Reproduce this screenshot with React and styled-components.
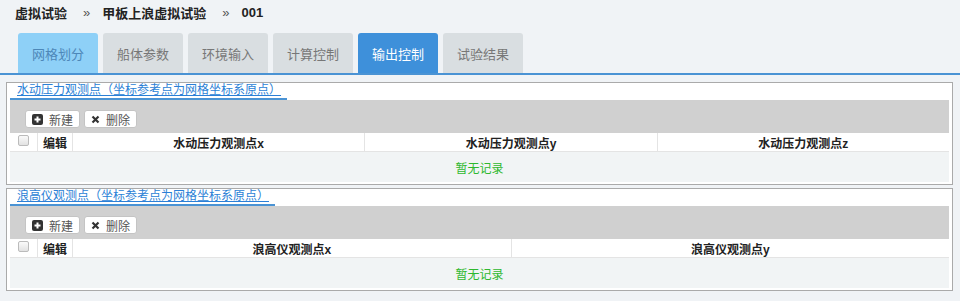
import React from 'react';
import styled, { createGlobalStyle } from 'styled-components';

const Global = createGlobalStyle`
  html, body {
    margin: 0;
    padding: 0;
    background: #f0f3f6;
    font-family: "Liberation Sans", "Noto Sans CJK SC", sans-serif;
    font-size: 12px;
    color: #333;
  }
`;

const Page = styled.div`
  width: 960px;
  height: 301px;
  overflow: hidden;
  background: #f0f3f6;
`;

const Crumbs = styled.div`
  display: flex;
  align-items: center;
  height: 25px;
  padding: 0 0 0 15px;
  font-size: 13px;
  font-weight: bold;
  color: #222;
`;

const Sep = styled.span`
  font-weight: normal;
  color: #555;
  margin: 0 12px 0 16px;
`;

const Tabs = styled.div`
  display: flex;
  gap: 5px;
  padding: 8px 0 0 18px;
  border-bottom: 2px solid #4a93d4;
`;

const Tab = styled.div`
  width: 80px;
  height: 40px;
  display: flex;
  align-items: center;
  justify-content: center;
  font-size: 13px;
  border-radius: 3px 3px 0 0;
  background: ${p => (p.$active ? '#3e90da' : p.$hover ? '#8ed0f7' : '#d9dee1')};
  color: ${p => (p.$active ? '#fff' : p.$hover ? '#4d87b8' : '#777')};
`;

const Panel = styled.div`
  margin: ${p => (p.$first ? '7px' : '3px')} 7px 0 6px;
  border: 1px solid #aaa;
  background: #fff;
  padding: 0 3px 2px 3px;
`;

const Title = styled.div`
  display: inline-block;
  padding: 0 6px 0 7px;
  line-height: 15px;
  font-size: 12px;
  color: #2b7fd6;
  text-decoration: underline;
  border-bottom: 2px solid #4a93d4;
  vertical-align: top;
`;

const Toolbar = styled.div`
  background: #d0d0d0;
  height: 33px;
  box-sizing: border-box;
  padding: 10px 0 0 15px;
  display: flex;
  align-items: flex-start;
  gap: 4px;
`;

const Btn = styled.button`
  display: flex;
  align-items: center;
  gap: 6px;
  height: 18px;
  padding: 0 6px;
  background: #fff;
  border: 1px solid #c4c4c4;
  border-radius: 3px;
  font-family: inherit;
  font-size: 12px;
  color: #555;
`;

const Table = styled.div`
  display: grid;
  grid-template-columns: 27px 35px repeat(${p => p.$cols}, 1fr);
`;

const Head = styled.div`
  height: 18px;
  display: flex;
  align-items: center;
  justify-content: ${p => (p.$left ? 'flex-start' : 'center')};
  padding-left: ${p => (p.$left ? '5px' : '0')};
  font-weight: bold;
  font-size: 12px;
  color: #222;
  border-left: ${p => (p.$noline ? 'none' : '1px solid #e4e4e4')};
  border-bottom: 1px solid #e4e4e4;
`;

const Check = styled.span`
  width: 9px;
  height: 9px;
  margin-top: -3px;
  border: 1px solid #bbb;
  border-radius: 2px;
  background: linear-gradient(#fafafa, #e2e2e2);
`;

const Empty = styled.div`
  grid-column: 1 / -1;
  height: 30px;
  background: #f1f4f5;
  display: flex;
  align-items: center;
  justify-content: center;
  color: #2eb82e;
  font-size: 12px;
`;

const PlusIcon = () => (
  <svg width="11" height="11" viewBox="0 0 11 11">
    <rect x="0" y="0" width="11" height="11" rx="2" fill="#333" />
    <path d="M5.5 2.5v6M2.5 5.5h6" stroke="#fff" strokeWidth="2" />
  </svg>
);

const CrossIcon = () => (
  <svg width="9" height="9" viewBox="0 0 9 9">
    <path d="M1.5 1.5l6 6M7.5 1.5l-6 6" stroke="#333" strokeWidth="2.2" />
  </svg>
);

function Section({ title, cols, first }) {
  return (
    <Panel $first={first}>
      <Title>{title}</Title>
      <Toolbar>
        <Btn><PlusIcon />新建</Btn>
        <Btn><CrossIcon />删除</Btn>
      </Toolbar>
      <Table $cols={cols.length}>
        <Head $noline><Check /></Head>
        <Head $left>编辑</Head>
        {cols.map(c => <Head key={c}>{c}</Head>)}
        <Empty>暂无记录</Empty>
      </Table>
    </Panel>
  );
}

const tabs = ['网格划分', '船体参数', '环境输入', '计算控制', '输出控制', '试验结果'];

export default function App() {
  return (
    <Page>
      <Global />
      <Crumbs>
        <span>虚拟试验</span>
        <Sep>»</Sep>
        <span>甲板上浪虚拟试验</span>
        <Sep>»</Sep>
        <span>001</span>
      </Crumbs>
      <Tabs>
        {tabs.map((t, i) => (
          <Tab key={t} $hover={i === 0} $active={i === 4}>{t}</Tab>
        ))}
      </Tabs>
      <Section
        first
        title="水动压力观测点（坐标参考点为网格坐标系原点）"
        cols={['水动压力观测点x', '水动压力观测点y', '水动压力观测点z']}
      />
      <Section
        title="浪高仪观测点（坐标参考点为网格坐标系原点）"
        cols={['浪高仪观测点x', '浪高仪观测点y']}
      />
    </Page>
  );
}
